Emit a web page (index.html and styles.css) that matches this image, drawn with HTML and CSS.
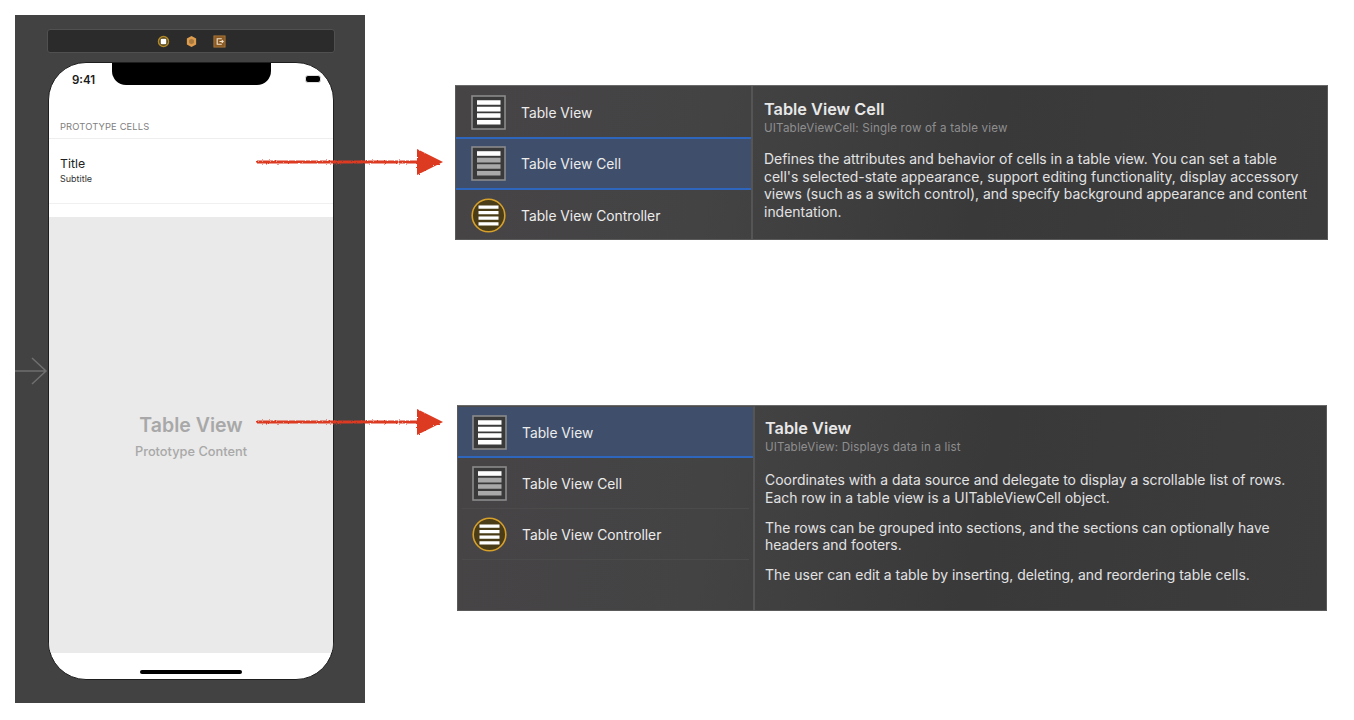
FILE: index.html
```html
<!DOCTYPE html>
<html lang="en">
<head>
<meta charset="utf-8">
<title>Table View Cell</title>
<link rel="stylesheet" href="styles.css">
</head>
<body>
<svg class="defs" width="0" height="0" aria-hidden="true">
  <defs>
    <filter id="rough" x="-5%" y="-30%" width="110%" height="160%">
      <feTurbulence type="fractalNoise" baseFrequency="0.7" numOctaves="2" seed="4"/>
      <feDisplacementMap in="SourceGraphic" scale="2.6"/>
    </filter>
    <symbol id="i-table" viewBox="0 0 35 35">
      <rect x="1" y="1" width="33" height="33" fill="#3a3a3b" stroke="#8b8b8c" stroke-width="1.6"/>
      <path fill="#fff" d="M6 5.2h23.5v4.6H6zM6 11.8h23.5v4.6H6zM6 18.2h23.5v4.6H6zM6 25h23.5v4.6H6z"/>
    </symbol>
    <symbol id="i-cell" viewBox="0 0 35 35">
      <rect x="1" y="1" width="33" height="33" fill="#3a3a3b" stroke="#8b8b8c" stroke-width="1.6"/>
      <path fill="#fff" d="M6 5.2h23.5v4.6H6z"/>
      <path fill="#a9a9a9" d="M6 11.8h23.5v4.6H6zM6 18.2h23.5v4.6H6zM6 25h23.5v4.6H6z"/>
    </symbol>
    <symbol id="i-ctrl" viewBox="0 0 35 35">
      <circle cx="17.5" cy="17.5" r="16.3" fill="#4a3c17" stroke="#d6a02c" stroke-width="1.6"/>
      <path fill="#fff" d="M7.5 7.5h20v3.2h-20zM7.5 13h20v3.2h-20zM7.5 18.6h20v3.2h-20zM7.5 24.2h20v3.2h-20z"/>
    </symbol>
  </defs>
</svg>

<main class="page">
  <section class="board">
    <div class="toolbar">
      <svg class="tool" viewBox="0 0 14 14"><circle cx="7" cy="7" r="5.4" fill="#4a3c17" stroke="#b08a2a" stroke-width="1.6"/><rect x="4" y="4" width="6" height="6" rx="1" fill="#fff"/></svg>
      <svg class="tool" viewBox="0 0 14 14"><path d="M7 1l5 2.8v6.4L7 13l-5-2.8V3.800z" fill="#dd9c4e"/><path d="M7 4l2.600 1.500v3L7 10 4.400 8.500v-3z" fill="#a87a40"/></svg>
      <svg class="tool" viewBox="0 0 14 14"><rect x="1" y="1" width="12" height="12" fill="#8a5a24" stroke="#a9773a" stroke-width="1"/><path d="M9.500 4H4.500v6h5M7 7h4M9.500 5.500L11 7 9.500 8.500" fill="none" stroke="#f2e3cc" stroke-width="1.200"/></svg>
    </div>
    <div class="phone">
      <div class="status">
        <span class="time">9:41</span>
        <div class="notch"></div>
        <span class="battery"></span>
      </div>
      <div class="section-head">PROTOTYPE CELLS</div>
      <div class="cell">
        <div class="cell-title">Title</div>
        <div class="cell-sub">Subtitle</div>
      </div>
      <div class="prototype">
        <div class="proto-title">Table View</div>
        <div class="proto-sub">Prototype Content</div>
      </div>
      <div class="home"><span class="home-bar"></span></div>
    </div>
  </section>

  <div class="panels">
    <section class="panel panel-top">
      <ul class="list">
        <li class="row"><svg class="icon"><use href="#i-table"/></svg><span class="label">Table View</span></li>
        <li class="row selected"><svg class="icon"><use href="#i-cell"/></svg><span class="label">Table View Cell</span></li>
        <li class="row"><svg class="icon"><use href="#i-ctrl"/></svg><span class="label">Table View Controller</span></li>
      </ul>
      <article class="detail">
        <h2>Table View Cell</h2>
        <p class="sub">UITableViewCell: Single row of a table view</p>
        <p>Defines the attributes and behavior of cells in a table view. You can set a table cell's selected-state appearance, support editing functionality, display accessory views (such as a switch control), and specify background appearance and content indentation.</p>
      </article>
    </section>

    <section class="panel panel-bottom">
      <ul class="list">
        <li class="row selected"><svg class="icon"><use href="#i-table"/></svg><span class="label">Table View</span></li>
        <li class="row ruled"><svg class="icon"><use href="#i-cell"/></svg><span class="label">Table View Cell</span></li>
        <li class="row ruled"><svg class="icon"><use href="#i-ctrl"/></svg><span class="label">Table View Controller</span></li>
      </ul>
      <article class="detail">
        <h2>Table View</h2>
        <p class="sub">UITableView: Displays data in a list</p>
        <p>Coordinates with a data source and delegate to display a scrollable list of rows. Each row in a table view is a UITableViewCell object.</p>
        <p>The rows can be grouped into sections, and the sections can optionally have headers and footers.</p>
        <p>The user can edit a table by inserting, deleting, and reordering table cells.</p>
      </article>
    </section>
  </div>
</main>

<svg class="entry" viewBox="0 0 33 30"><path d="M0 15h31M17 2l14 13-14 13" fill="none" stroke="#6f6f6f" stroke-width="1.500"/></svg>
<svg class="arrow arrow-one" viewBox="0 0 190 32"><g filter="url(#rough)" fill="#dc3a24"><rect x="1" y="14.500" width="165" height="3"/><path d="M162 3l26 13-26 13z"/></g></svg>
<svg class="arrow arrow-two" viewBox="0 0 190 32"><g filter="url(#rough)" fill="#dc3a24"><rect x="1" y="14.500" width="165" height="3"/><path d="M162 3l26 13-26 13z"/></g></svg>
</body>
</html>
```

FILE: styles.css
```css
* { box-sizing: border-box; }

html, body {
  margin: 0;
  height: 720px;
  overflow: hidden;
  background: #fff;
  font-family: Inter, "Liberation Sans", sans-serif;
}

.defs { position: absolute; }

.page { display: flex; align-items: flex-start; }

/* Storyboard */
.board {
  margin: 15px 0 0 15px;
  width: 350px;
  height: 688px;
  padding: 14px 30px 0 32px;
  background: #424242;
  display: flex;
  flex-direction: column;
}

.toolbar {
  height: 24px;
  width: 288px;
  margin-bottom: 9px;
  background: #2b2b2b;
  border: 1px solid #505050;
  border-radius: 3px;
  display: flex;
  align-items: center;
  justify-content: center;
  gap: 15px;
}

.tool { width: 13px; height: 13px; }

.phone {
  width: 286px;
  height: 618px;
  margin-left: 1px;
  background: #fff;
  border: 1px solid #1e1e1e;
  border-radius: 38px;
  overflow: hidden;
  display: flex;
  flex-direction: column;
}

.status {
  height: 52px;
  flex: none;
  display: flex;
  align-items: flex-start;
  padding: 0 12px 0 23px;
}

.time {
  width: 40px;
  margin-top: 10px;
  font-size: 11.500px;
  font-weight: 600;
  color: #1a1a1a;
}

.notch {
  width: 159px;
  height: 22px;
  background: #000;
  border-radius: 0 0 14px 14px;
}

.battery {
  width: 16px;
  height: 8px;
  margin: 12px 0 0 auto;
  background: #000;
  border: 1.500px solid #ddd;
  border-radius: 3px;
}

.section-head {
  height: 24px;
  flex: none;
  padding: 5px 0 0 11px;
  font-size: 9.400px;
  line-height: 14px;
  color: #808080;
  border-bottom: 1px solid #eee;
  letter-spacing: 0.120px;
}

.cell {
  height: 65px;
  flex: none;
  padding: 17px 0 0 11px;
  border-bottom: 1px solid #f0f0f0;
}

.cell-title { font-size: 12.300px; line-height: 16px; color: #222; }
.cell-sub { font-size: 9px; line-height: 12px; margin-top: 1px; color: #333; }

.prototype {
  margin-top: 13px;
  flex: 1;
  background: #eaeaea;
  display: flex;
  flex-direction: column;
  align-items: center;
  justify-content: center;
  padding: 2px 0 0 0;
  color: #a8a8a8;
}

.proto-title { font-size: 19.500px; font-weight: 600; line-height: 24px; }
.proto-sub { font-size: 12.800px; font-weight: 500; line-height: 16px; margin-top: 7px; }

.home {
  height: 26px;
  flex: none;
  display: flex;
  justify-content: center;
  padding-top: 17px;
}

.home-bar { width: 102px; height: 4px; border-radius: 2px; background: #000; }

/* Library panels */
.panels { margin-left: 90px; display: flex; flex-direction: column; }

.panel {
  display: flex;
  overflow: hidden;
  color: #e8e8e8;
  background: linear-gradient(100deg, #474446 0%, #434344 30%, #39393a 60%, #3c3c3d 100%);
  border: 1px solid #5a5a5a;
  border-top-color: #6a6a6a;
}

.panel-top { margin-top: 85px; width: 873px; height: 155px; }
.panel-bottom { margin: 165px 0 0 2px; width: 870px; height: 206px; }

.list {
  flex: none;
  width: 297px;
  margin: 0;
  padding: 0;
  list-style: none;
  border-right: 2px solid #555;
}

.panel-bottom .list { border-top: 1px solid #4a4a4a; }

.row {
  height: 51px;
  padding-left: 15px;
  display: flex;
  align-items: center;
  gap: 15px;
  font-size: 13.800px;
  color: #ececec;
}

.label { padding-top: 2px; }

.panel-top .row:first-child { height: 51px; padding-top: 1px; }
.panel-top .row:last-child { height: 50px; }
.panel-top .selected .label { padding-top: 0; }
.panel-bottom .row { padding-left: 14px; }

.row.selected {
  height: 53px;
  background: #3f4f6b;
  border-top: 2px solid #2f66bd;
  border-bottom: 2px solid #2f66bd;
}

.panel-bottom .row.selected {
  height: 51px;
  padding-top: 1px;
  border-top: 0;
  border-bottom: 2px solid #2f66bd;
}

.panel-bottom .row.ruled {
  margin: 0 4px;
  padding-left: 10px;
  border-bottom: 1px solid #4b4b4b;
}

.icon { width: 35px; height: 35px; flex: none; }

.detail {
  flex: 1;
  padding: 13px 0 0 11px;
  font-size: 13.950px;
  line-height: 17.600px;
  color: #e2e2e2;
}

.panel-bottom .detail { padding: 12px 0 0 10px; }

.detail h2 {
  margin: 0;
  font-size: 16.300px;
  line-height: 20px;
  font-weight: 600;
  color: #e8e8e8;
}

.detail p { margin: 0 0 12.400px; max-width: 545px; }

.detail p.sub {
  margin: 2px 0 15px;
  font-size: 11.600px;
  line-height: 14px;
  letter-spacing: 0.180px;
  color: #8f8f8f;
}

.panel-bottom .detail p.sub { margin-bottom: 17px; }

/* Overlays */
.entry { position: absolute; left: 15px; top: 356px; width: 33px; height: 30px; }

.arrow { position: absolute; left: 255px; width: 190px; height: 32px; }
.arrow-one { top: 146px; }
.arrow-two { top: 406px; }
```
